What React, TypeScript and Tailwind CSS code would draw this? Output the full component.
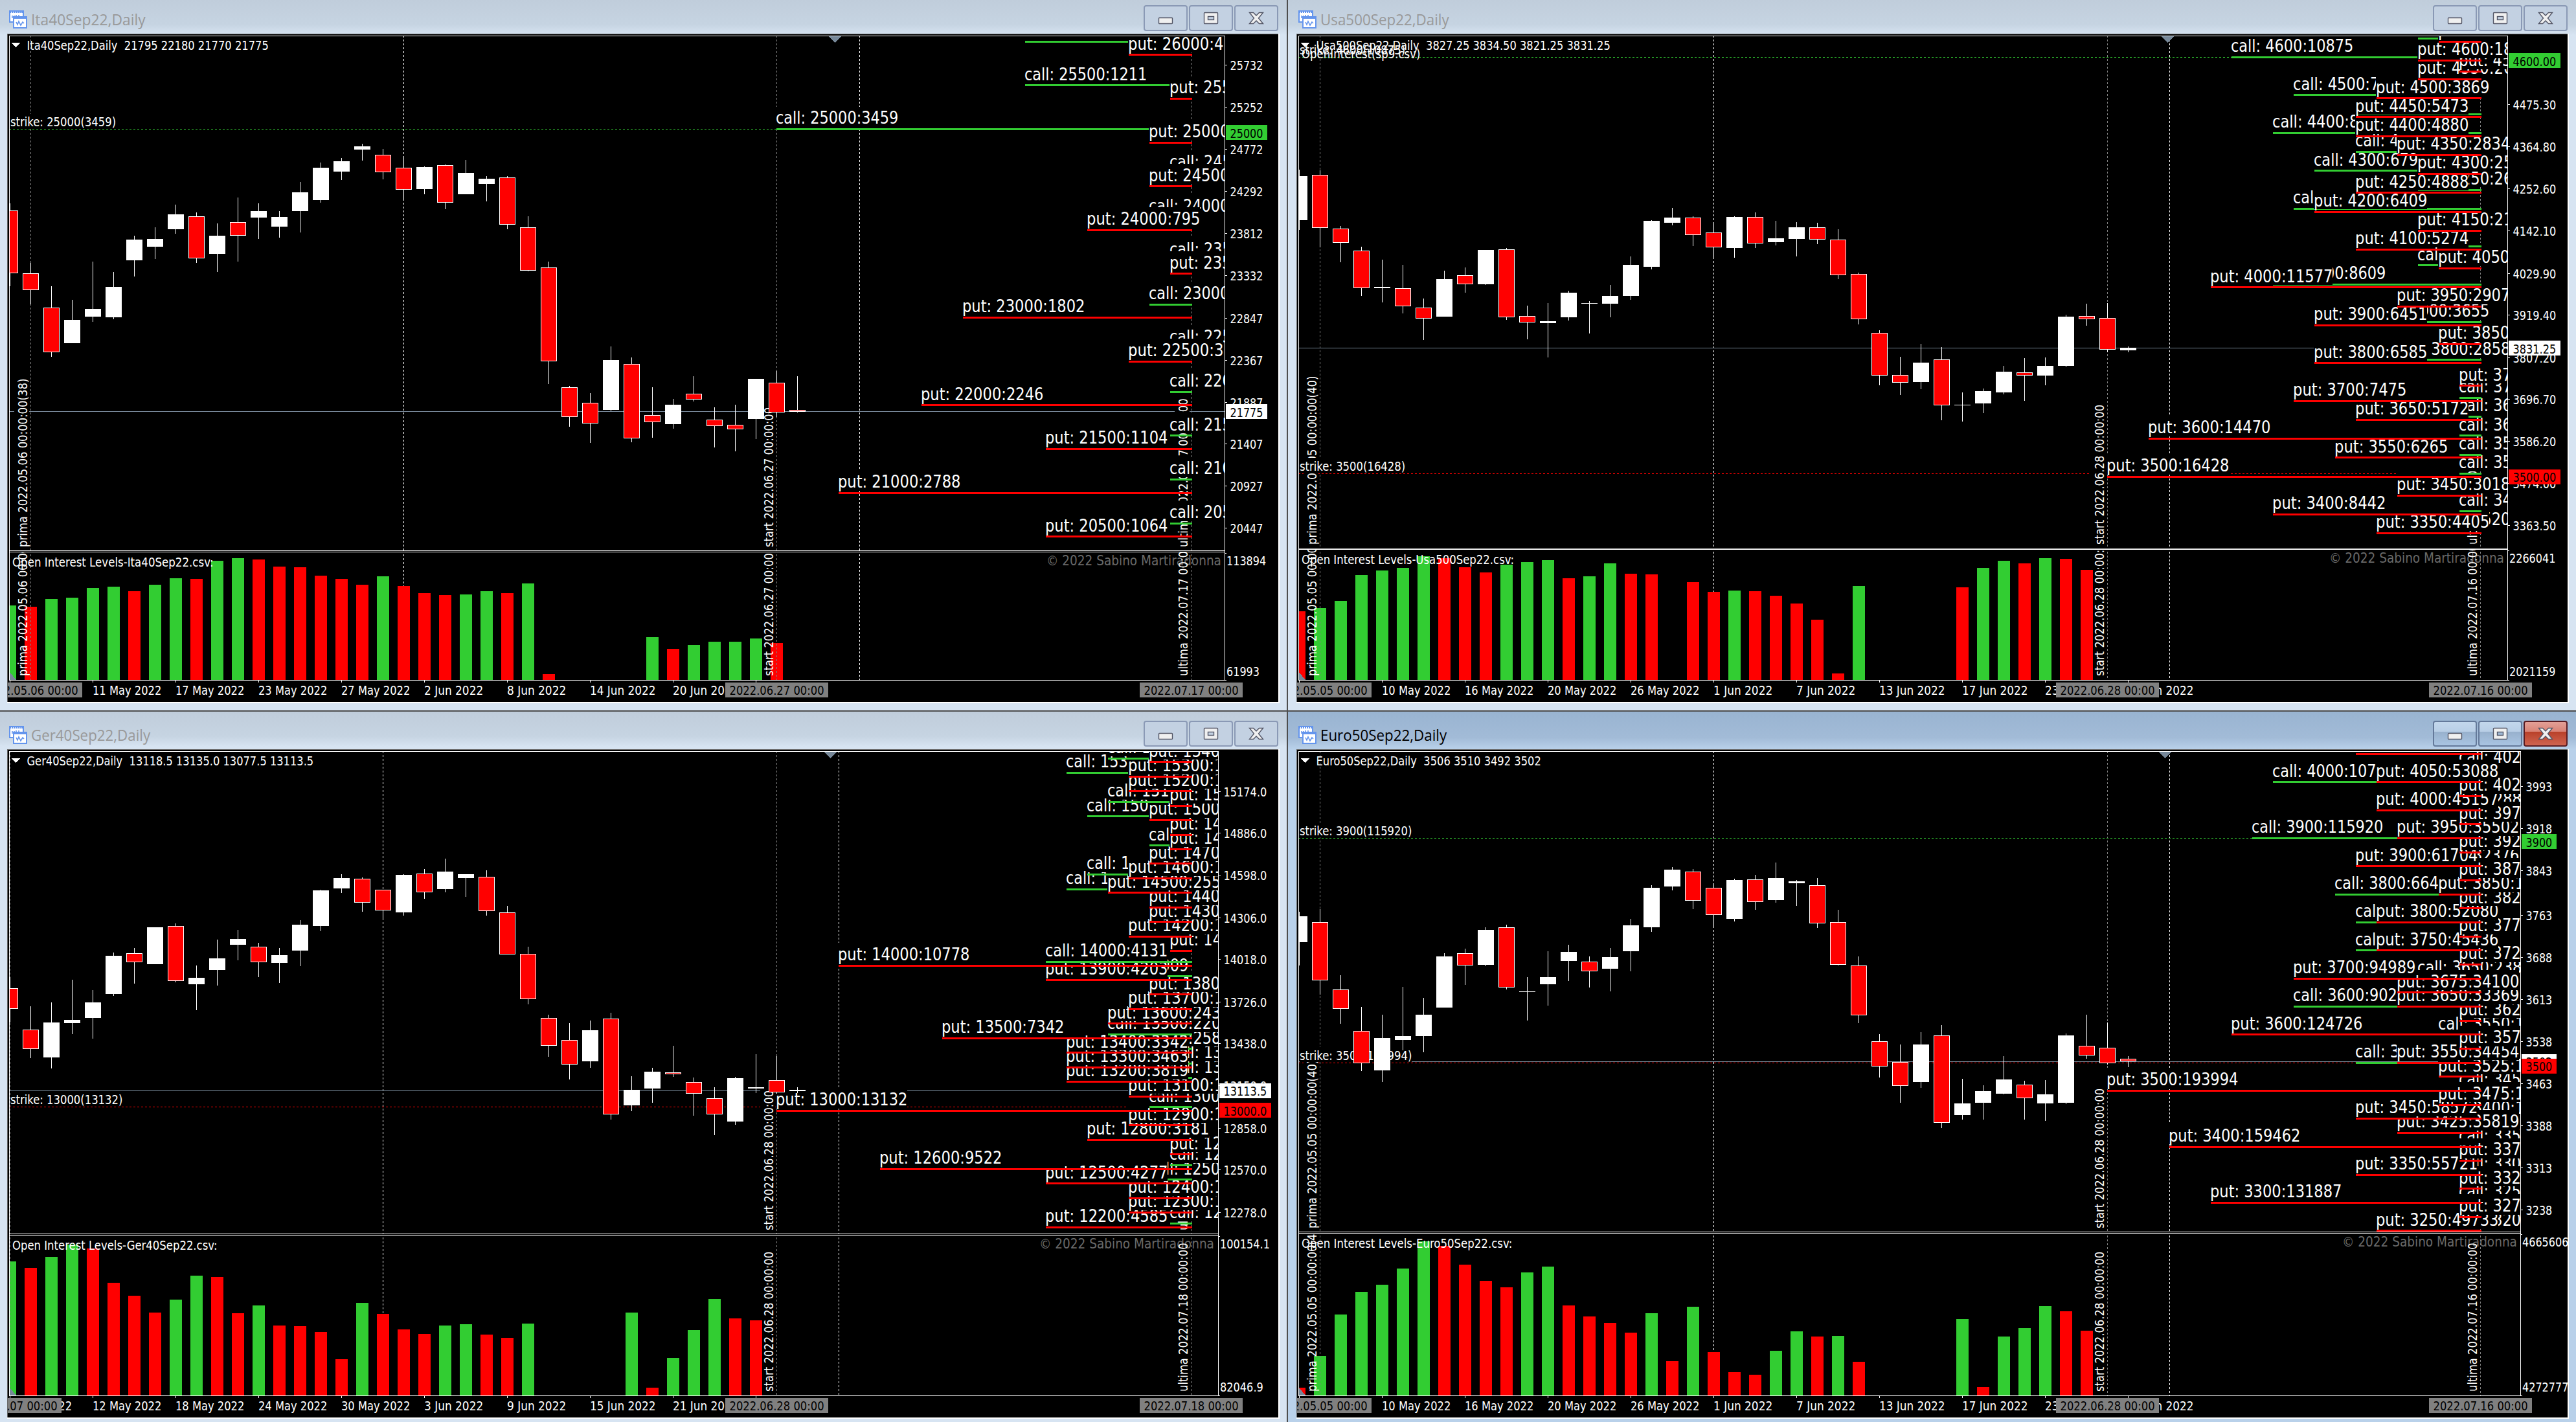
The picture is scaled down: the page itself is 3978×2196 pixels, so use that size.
import { useId } from "react";

type Candle = ["r" | "w", number, number, number, number];
type Bar = [number, "r" | "g", number];
// strike, call bars, call label, put bars, put label
type Level = [number, number, string, number, string];

interface ChartData {
      title: string;
      quote: string;
      left: number;
      top: number;
      x0: number;
      right: number;
      split: number;
      ref: [number, number];
      slope: number;
      putShift: number;
      price: number;
      decimals: number;
      unit: number;
      candles: Candle[];
      barUnit: number;
      barTop: number;
      bars: Bar[];
      levels: Level[];
      strikes: { at: number; label: string; color: string }[];
      ticks: number[];
      subTicks: [string, string];
      dates: [number, string][];
      marks: { at: number; name: string; date: string; label: string; main: boolean }[];
      monthLines: number[];
      shiftMark: number;
      copyright: number;
      comment?: string;
}

const STEP = 32;
const LIME = "#32cd32";
const RED = "#ff0000";
const SLATE = "#778899";

// advance widths in em
const ADVANCE: Record<string, number> = {
      " ": 0.3125, ":": 0.354, ".": 0.303, ",": 0.303, "(": 0.383, ")": 0.383, "-": 0.363, "©": 0.928,
      a: 0.525, b: 0.553, c: 0.4615, d: 0.553, e: 0.5265, f: 0.32, g: 0.553, h: 0.558, i: 0.2285, j: 0.282,
      k: 0.498, l: 0.2285, m: 0.84, n: 0.558, o: 0.543, p: 0.553, r: 0.36, s: 0.447, t: 0.3345, u: 0.558,
      v: 0.498, w: 0.742, x: 0.495, y: 0.498, z: 0.444,
      D: 0.678, E: 0.561, G: 0.667, I: 0.3735, J: 0.417, L: 0.498, M: 0.77, O: 0.708, S: 0.557, U: 0.6555,
};

const measure = (text: string, size: number) =>
      [...text].reduce((sum, ch) => sum + (ADVANCE[ch] ?? 0.5459), 0) * size;

const SMALL = 18.67;
const LABEL = 25.67;

interface LabelProps {
      x: number;
      y: number;
      text: string;
      size?: number;
      fill?: string;
      solid?: boolean;
      vertical?: boolean;
}

const Label = ({ x, y, text, size = SMALL, fill = "#fff", solid, vertical }: LabelProps) => {
      const width = measure(text, size);
      return (
            <g transform={vertical ? `translate(${x} ${y}) rotate(-90)` : `translate(${x} ${y})`}>
                  {solid && <rect x={0} y={-size * 1.04} width={width} height={size * 1.22} fill="#000" />}
                  <text
                        className="whitespace-pre font-['DejaVu_Sans_Condensed','DejaVu_Sans',sans-serif] [font-stretch:condensed]"
                        fontSize={size}
                        fill={fill}
                        textLength={width}
                        lengthAdjust="spacingAndGlyphs"
                  >
                        {text}
                  </text>
            </g>
      );
};

const Chart = ({ data: d }: { data: ChartData }) => {
      const id = useId();
      const dy = d.top;
      const base = dy + 998;
      const plotTop = dy + 3;
      const plotLeft = d.left + 3;
      const last = d.x0 + STEP * 57;
      const barX = (i: number) => d.x0 + STEP * i;
      const priceY = (p: number) => d.ref[1] + (d.ref[0] - p) * d.slope;
      const origin = dy < 500 ? 0 : 1090;
      const candleY = (v: number) => Math.round(origin + v / d.unit);
      const fmt = (p: number) => p.toFixed(d.decimals);
      const tagWidth = measure(fmt(d.price), SMALL) + 13;

      const tag = (y: number, p: number, bg: string, fg: string) => (
            <g key={`${p}${bg}`}>
                  <rect x={d.right + 2} y={Math.round(y - 11.5)} width={tagWidth} height={23} fill={bg} />
                  <Label x={d.right + 8.5} y={y + 8} text={fmt(p)} fill={fg} />
            </g>
      );

      return (
            <svg
                  className="block h-[1032px] w-[1963px] bg-black"
                  viewBox={`${d.left} ${d.top} 1963 1032`}
                  shapeRendering="crispEdges"
            >
                  <defs>
                        <clipPath id={`${id}m`}>
                              <rect x={plotLeft + 1} y={plotTop + 1} width={d.right - plotLeft - 1} height={d.split - plotTop - 1} />
                        </clipPath>
                        <clipPath id={`${id}s`}>
                              <rect x={plotLeft + 1} y={d.split + 3} width={d.right - plotLeft - 1} height={base - d.split - 3} />
                        </clipPath>
                  </defs>

                  {/* price pane */}
                  <g clipPath={`url(#${id}m)`}>
                        {d.monthLines.map((i) => (
                              <path key={i} d={`M${barX(i)} ${plotTop}V${d.split}`} stroke="#fff" strokeDasharray="3 3" />
                        ))}
                        {d.marks.map((m) => (
                              <path key={m.at} d={`M${barX(m.at)} ${plotTop}V${d.split}`} stroke="#808080" strokeDasharray="3 3" />
                        ))}
                        <path d={`M${plotLeft} ${Math.floor(priceY(d.price)) + 0.5}H${d.right}`} stroke={SLATE} />
                        {d.strikes.map((s) => (
                              <path
                                    key={s.at}
                                    d={`M${plotLeft} ${Math.floor(priceY(s.at)) + 0.5}H${d.right}`}
                                    stroke={s.color}
                                    strokeDasharray="3 3"
                              />
                        ))}
                        {d.marks.map((m) => m.main && (
                              <Label key={m.at} x={barX(m.at) - 6} y={d.split - 5} text={m.name + " " + m.date} solid vertical />
                        ))}
                        {d.strikes.map((s) => (
                              <Label key={s.at} x={plotLeft + 2} y={priceY(s.at) - 4.5} text={s.label} solid />
                        ))}
                        {d.levels.map(([k, cn, ct, pn, pt]) => {
                              const cy = priceY(k);
                              const py = cy + d.putShift;
                              const cx = last - STEP * cn - 1;
                              const px = last - STEP * pn - 1;
                              return (
                                    <g key={k}>
                                          {cn > 0 && <rect x={cx} y={Math.round(cy - 1.5)} width={last - cx + 1} height={3} fill={LIME} />}
                                          {ct && <Label x={cx - 0.5} y={cy - 8.2} text={ct} size={LABEL} solid />}
                                          {pt && <Label x={px - 0.5} y={py - 8.2} text={pt} size={LABEL} solid />}
                                          {pn > 0 && <rect x={px} y={Math.round(py - 1.5)} width={last - px + 1} height={3} fill={RED} />}
                                    </g>
                              );
                        })}
                        {d.candles.map(([kind, hi, a, b, lo], i) => {
                              const x = barX(i);
                              const y = candleY(a);
                              const h = Math.max(candleY(b) - y, 1);
                              return (
                                    <g key={i}>
                                          <rect x={x - 0.5} y={candleY(hi)} width={1} height={candleY(lo) - candleY(hi)} fill="#fff" />
                                          <rect x={x - 12.5} y={y} width={25} height={h} fill="#fff" />
                                          {kind === "r" && h > 2 && <rect x={x - 11.5} y={y + 1} width={23} height={h - 2} fill={RED} />}
                                    </g>
                              );
                        })}
                        <path d={`M${d.shiftMark - 10} ${plotTop + 1}h20l-10 10z`} fill={SLATE} />
                  </g>
                  <path d={`M${plotLeft + 4} ${dy + 14}h13l-6.5 7z`} fill="#fff" />
                  {d.comment && <Label x={plotLeft + 5} y={dy + 38} text={d.comment} />}
                  <Label x={plotLeft + 27.5} y={dy + 25} text={`${d.title},Daily  ${d.quote}`} />

                  {/* open interest pane */}
                  <g clipPath={`url(#${id}s)`}>
                        {d.monthLines.map((i) => (
                              <path key={i} d={`M${barX(i)} ${d.split}V${base}`} stroke="#fff" strokeDasharray="3 3" />
                        ))}
                        <Label x={d.copyright} y={d.split + 22.5} text="© 2022 Sabino Martiradonna" size={21} fill="#696969" />
                        {d.bars.map(([i, kind, v]) => {
                              const y = Math.round(d.barTop + v / d.barUnit);
                              return <rect key={i} x={barX(i) - 9.5} y={y} width={19} height={base - y} fill={kind === "g" ? LIME : RED} />;
                        })}
                        {d.marks.map((m) => (
                              <path key={m.at} d={`M${barX(m.at)} ${d.split}V${base}`} stroke="#808080" strokeDasharray="3 3" />
                        ))}
                        {d.marks.map((m) => (
                              <Label key={m.at} x={barX(m.at) - 6} y={base - 6} text={m.name + " " + m.date} vertical />
                        ))}
                        <path d={`M${plotLeft + 1} ${base - 12}v12h10z`} fill={SLATE} />
                        <Label x={plotLeft + 5} y={d.split + 25} text={`Open Interest Levels-${d.title}.csv:`} />
                  </g>

                  {/* frame lines */}
                  <path
                        d={`M${plotLeft + 0.5} ${base + 0.5}V${plotTop + 0.5}H${d.right + 0.5}V${base + 0.5}H${plotLeft}M${plotLeft} ${d.split + 0.5}H${d.right}M${plotLeft} ${d.split + 2.5}H${d.right}`}
                        stroke="#fff"
                        fill="none"
                  />

                  {/* price scale */}
                  {d.ticks.map((p) => (
                        <g key={p}>
                              <rect x={d.right} y={Math.round(priceY(p))} width={4} height={1} fill="#fff" />
                              <Label x={d.right + 8.5} y={priceY(p) + 8} text={fmt(p)} />
                        </g>
                  ))}
                  <rect x={d.right} y={d.split + 4} width={3} height={1} fill="#fff" />
                  <rect x={d.right} y={base} width={3} height={1} fill="#fff" />
                  <Label x={d.right + 3} y={d.split + 22.5} text={d.subTicks[0]} />
                  <Label x={d.right + 3} y={base - 6} text={d.subTicks[1]} />
                  {tag(priceY(d.price), d.price, "#fff", "#000")}
                  {d.strikes.map((s) => tag(priceY(s.at) + 5, s.at, s.color, "#000"))}

                  {/* time scale */}
                  {d.dates.map(([i, text]) => (
                        <g key={i}>
                              <rect x={barX(i) - 0.5} y={base} width={1} height={4} fill="#fff" />
                              {text && <Label x={barX(i) - 0.5} y={base + 22.5} text={text} />}
                        </g>
                  ))}
                  {d.marks.map((m) => (
                        <g key={m.at}>
                              <rect x={barX(m.at) - 80} y={base + 4} width={159} height={23} fill="#808080" />
                              <Label x={barX(m.at) - 73} y={base + 22.5} text={m.label} fill="#000" />
                        </g>
                  ))}
                  <path d={`M${d.left + 0.5} ${d.top + 1032}V${d.top + 0.5}H${d.left + 1963}`} stroke="#696969" fill="none" />
            </svg>
      );
};

const ChartIcon = () => (
      <svg className="h-7 w-7" viewBox="0 0 28 28" fill="#fff" stroke="#6495ed" strokeWidth="2">
            <rect x="1" y="1" width="21" height="17" />
            <path d="M1 2.5h21" strokeWidth="3" strokeDasharray="2 1" />
            <path d="M5 12V8M8 11V8M11 14V7M15 10V7" strokeWidth="1.6" />
            <rect x="7" y="10" width="20" height="17" />
            <path d="M7 11.5h20" strokeWidth="3" />
            <path d="M11 18l2 4 2-5 3 6 3-5 2 2" fill="none" strokeWidth="1.6" />
      </svg>
);

const ControlButton = ({ kind, active }: { kind: "min" | "max" | "close"; active?: boolean }) => {
      let look = "border-[#8a99b5] bg-[#c3d1e2]";
      if (active) {
            look = kind === "close"
                  ? "border-[#5a1c22] bg-[linear-gradient(#e3a097_0%,#d98275_42%,#b9412a_43%,#cf6450_100%)]"
                  : "border-[#64799a] bg-[linear-gradient(#c3d7ec_0%,#b8cee6_42%,#98b1cd_43%,#a9c4e2_100%)]";
      }
      return (
            <div className={`flex h-10 w-[68px] items-center justify-center rounded-sm border-2 ${look}`}>
                  <svg className="h-5 w-6" viewBox="0 0 24 20" stroke="#535666" strokeWidth="1.4" fill="#f0f0f0">
                        {kind === "min" && <rect x="1.5" y="9.5" width="21" height="9" rx="1" />}
                        {kind === "max" && (
                              <>
                                    <rect x="1.5" y="1.5" width="21" height="17" rx="1" />
                                    <rect x="7.5" y="7.5" width="9" height="5" fill={active ? "#9fb8d4" : "#c3d1e2"} />
                              </>
                        )}
                        {kind === "close" && <path d="M1.500 1.500h6l4.500 4.500 4.500-4.500h6l-7 8.500 7 8.500h-6l-4.500-4.500-4.500 4.500h-6l7-8.500z" />}
                  </svg>
            </div>
      );
};

const ChartWindow = ({ data, active, side, row }: { data: ChartData; active?: boolean; side: "left" | "right"; row: "top" | "bottom" }) => (
      <section
            className={`flex shrink-0 flex-col ${side === "left" ? "w-[1989px] border-r-2 border-[#4d4d4d] pl-[11px]" : "w-[1989px] pl-[13px]"} ${
                  row === "top" ? "h-[1099px] border-b-2 border-b-[#4d4d4d]" : "h-[1097px]"
            } ${active ? "bg-[linear-gradient(#99b4d1_0,#a2bbd7_40px,#b9d1ea_58px)]" : "bg-[linear-gradient(#c0cddb_0,#c6d4e2_38px,#d7e4f2_54px)]"}`}
      >
            <header className={`flex w-[1963px] shrink-0 items-start ${row === "top" ? "h-[52px] pt-2" : "h-[58px] pt-[14px]"}`}>
                  <div className="flex items-center gap-1.5 pl-[3px] pt-1.5">
                        <ChartIcon />
                        <svg className="h-8 w-[300px]">
                              <text
                                    x={0}
                                    y={24.5}
                                    fontSize={23.3}
                                    fill={active ? "#000" : "#999"}
                                    textLength={measure(`${data.title},Daily`, 23.5)}
                                    lengthAdjust="spacingAndGlyphs"
                                    className="font-['Open_Sans','Noto_Sans',sans-serif]"
                              >
                                    {data.title},Daily
                              </text>
                        </svg>
                  </div>
                  <div className="ml-auto flex gap-0.5">
                        <ControlButton kind="min" active={active} />
                        <ControlButton kind="max" active={active} />
                        <ControlButton kind="close" active={active} />
                  </div>
            </header>
            <div className="w-[1965px] border-b-2 border-r-2 border-white">
                  <Chart data={data} />
            </div>
      </section>
);

const ita: ChartData = {
      title: "Ita40Sep22",
      quote: "21795 22180 21770 21775",
      left: 11, top: 52, x0: 15.5, right: 1891, split: 850,
      ref: [25000, 199.5], slope: 0.13525, putShift: 20.6, price: 21775, decimals: 0,
      unit: 1.8233,
      candles: [
            ["r", 573, 593, 769, 806], ["r", 740, 769, 816, 857], ["r", 806, 866, 992, 1005], ["w", 844, 901, 966, 966],
            ["w", 737, 870, 892, 906], ["w", 766, 808, 893, 899], ["w", 664, 675, 733, 779], ["w", 640, 673, 695, 729],
            ["w", 576, 603, 645, 658], ["r", 598, 609, 728, 740], ["w", 629, 664, 715, 766], ["r", 556, 625, 663, 737],
            ["w", 573, 594, 613, 673], ["w", 594, 611, 638, 669], ["w", 512, 542, 594, 655], ["w", 458, 472, 563, 571],
            ["w", 445, 454, 483, 507], ["w", 405, 412, 421, 452], ["r", 419, 436, 485, 505], ["r", 440, 472, 535, 563],
            ["w", 469, 470, 532, 547], ["r", 464, 465, 571, 589], ["w", 450, 487, 547, 547], ["w", 496, 503, 518, 567],
            ["r", 496, 500, 632, 645], ["r", 609, 640, 763, 764], ["r", 737, 753, 1018, 1081], ["r", 1087, 1090, 1175, 1202],
            ["r", 1107, 1134, 1192, 1247], ["w", 975, 1014, 1154, 1157], ["r", 1006, 1025, 1234, 1245], ["r", 1090, 1169, 1189, 1233],
            ["w", 1123, 1140, 1194, 1207], ["r", 1059, 1108, 1125, 1130], ["r", 1147, 1181, 1200, 1260], ["r", 1140, 1196, 1209, 1271],
            ["w", 1067, 1067, 1180, 1236], ["r", 1045, 1077, 1161, 1174], ["r", 1059, 1154, 1160, 1161],
      ],
      barUnit: 3, barTop: 840,
      bars: [
            [0, "g", 285], [1, "r", 291], [2, "g", 255], [3, "g", 249], [4, "g", 204], [5, "g", 198], [6, "r", 219], [7, "g", 189],
            [8, "g", 159], [9, "r", 162], [10, "g", 78], [11, "g", 66], [12, "r", 72], [13, "r", 105], [14, "r", 108], [15, "r", 147],
            [16, "r", 162], [17, "r", 189], [18, "g", 150], [19, "r", 195], [20, "r", 228], [21, "r", 237], [22, "g", 234],
            [23, "g", 219], [24, "r", 228], [25, "g", 183], [26, "r", 603], [31, "g", 432], [32, "r", 486], [33, "g", 468],
            [34, "g", 453], [35, "g", 453], [36, "g", 438], [37, "r", 459],
      ],
      levels: [
            [20500, 1, "call: 20500", 7, "put: 20500:1064"],
            [21000, 1, "call: 21000", 17, "put: 21000:2788"],
            [21500, 1, "call: 21500", 7, "put: 21500:1104"],
            [22000, 1, "call: 22000", 13, "put: 22000:2246"],
            [22500, 1, "call: 22500", 3, "put: 22500:3"],
            [23000, 2, "call: 23000", 11, "put: 23000:1802"],
            [23500, 1, "call: 23500", 1, "put: 23500"],
            [24000, 2, "call: 24000", 5, "put: 24000:795"],
            [24500, 1, "call: 24500", 2, "put: 24500"],
            [25000, 20, "call: 25000:3459", 2, "put: 25000"],
            [25500, 8, "call: 25500:1211", 1, "put: 25500"],
            [26000, 8, "", 3, "put: 26000:4"],
      ],
      strikes: [{ at: 25000, label: "strike: 25000(3459)", color: LIME }],
      ticks: [25732, 25252, 24772, 24292, 23812, 23332, 22847, 22367, 21887, 21407, 20927, 20447],
      subTicks: ["113894", "61993"],
      dates: [
            [0, ""], [4, "11 May 2022"], [8, "17 May 2022"], [12, "23 May 2022"], [16, "27 May 2022"], [20, "2 Jun 2022"],
            [24, "8 Jun 2022"], [28, "14 Jun 2022"], [32, "20 Jun 2022"], [36, ""],
      ],
      marks: [
            { at: 1, name: "prima", date: "2022.05.06 00:00:00(38)", label: "2022.05.06 00:00", main: true },
            { at: 37, name: "start", date: "2022.06.27 00:00:00", label: "2022.06.27 00:00", main: true },
            { at: 57, name: "ultima", date: "2022.07.17 00:00:00", label: "2022.07.17 00:00", main: true },
      ],
      monthLines: [19, 41],
      shiftMark: 1289.5,
      copyright: 1616,
};

const usa: ChartData = {
      title: "Usa500Sep22",
      quote: "3827.25 3834.50 3821.25 3831.25",
      left: 2002, top: 52, x0: 2006.5, right: 3872, split: 846,
      ref: [4600, 88.5], slope: 0.5843, putShift: 4.8, price: 3831.25, decimals: 2,
      unit: 1.8233,
      candles: [
            ["w", 478, 496, 620, 648], ["r", 480, 492, 641, 696], ["r", 636, 644, 684, 738], ["r", 695, 706, 812, 833],
            ["w", 731, 808, 811, 851], ["r", 746, 811, 862, 882], ["r", 841, 866, 897, 957], ["w", 762, 786, 892, 892],
            ["r", 753, 775, 801, 824], ["w", 704, 704, 800, 802], ["r", 698, 702, 893, 901], ["r", 861, 890, 908, 955],
            ["w", 853, 904, 910, 1006], ["w", 819, 824, 893, 903], ["w", 848, 853, 855, 939], ["w", 802, 833, 855, 893],
            ["w", 722, 746, 833, 844], ["w", 620, 622, 751, 758], ["w", 585, 613, 627, 634], ["r", 609, 613, 661, 693],
            ["r", 625, 655, 697, 728], ["w", 609, 611, 698, 726], ["r", 598, 611, 685, 698], ["w", 622, 671, 682, 691],
            ["w", 625, 640, 673, 722], ["r", 627, 640, 675, 687], ["r", 645, 675, 774, 786], ["r", 768, 771, 898, 913],
            ["r", 930, 937, 1058, 1085], ["r", 1005, 1056, 1078, 1112], ["w", 968, 1021, 1076, 1096], ["r", 977, 1012, 1142, 1183],
            ["w", 1105, 1139, 1141, 1187], ["w", 1094, 1101, 1136, 1163], ["w", 1030, 1047, 1105, 1110], ["r", 1008, 1048, 1057, 1129],
            ["w", 1006, 1030, 1057, 1085], ["w", 886, 892, 1030, 1034], ["r", 855, 890, 899, 917], ["r", 853, 895, 985, 992],
            ["w", 975, 979, 986, 992],
      ],
      barUnit: 3, barTop: 840,
      bars: [
            [0, "r", 312], [1, "g", 297], [2, "g", 264], [3, "g", 144], [4, "g", 123], [5, "g", 111], [6, "g", 57], [7, "r", 66],
            [8, "r", 108], [9, "r", 132], [10, "g", 96], [11, "g", 84], [12, "g", 75], [13, "r", 159], [14, "g", 150], [15, "g", 90],
            [16, "r", 138], [17, "r", 141], [19, "r", 177], [20, "r", 222], [21, "g", 216], [22, "r", 219], [23, "r", 240],
            [24, "r", 276], [25, "r", 351], [26, "r", 600], [27, "g", 195], [32, "r", 201], [33, "g", 111], [34, "g", 78],
            [35, "r", 90], [36, "g", 66], [37, "r", 69], [38, "r", 120],
      ],
      levels: [
            [3350, 4, "call: 3350:1520", 5, "put: 3350:4405"],
            [3400, 1, "call: 3400", 10, "put: 3400:8442"],
            [3450, 0, "", 4, "put: 3450:3018"],
            [3500, 1, "call: 3500", 18, "put: 3500:16428"],
            [3550, 1, "call: 3550", 7, "put: 3550:6265"],
            [3600, 1, "call: 3600", 16, "put: 3600:14470"],
            [3650, 1, "call: 3650", 6, "put: 3650:5172"],
            [3700, 1, "call: 3700", 9, "put: 3700:7475"],
            [3740, 1, "", 1, "put: 3740"],
            [3800, 4, "call: 3800:2858", 8, "put: 3800:6585"],
            [3850, 0, "", 2, "put: 3850"],
            [3900, 5, "call: 3900:3655", 8, "put: 3900:6451"],
            [3950, 0, "", 4, "put: 3950:2907"],
            [4000, 10, "call: 4000:8609", 13, "put: 4000:11577"],
            [4050, 3, "call: 4050", 2, "put: 4050"],
            [4100, 6, "", 6, "put: 4100:5274"],
            [4150, 0, "", 3, "put: 4150:21"],
            [4200, 9, "call: 4200", 8, "put: 4200:6409"],
            [4250, 3, "call: 4250:26", 6, "put: 4250:4888"],
            [4300, 8, "call: 4300:6791", 3, "put: 4300:25"],
            [4350, 6, "call: 4350", 4, "put: 4350:2834"],
            [4400, 10, "call: 4400:8", 6, "put: 4400:4880"],
            [4450, 6, "", 6, "put: 4450:5473"],
            [4500, 9, "call: 4500:7", 5, "put: 4500:3869"],
            [4550, 0, "", 3, "put: 4550:26"],
            [4571, 1, "", 1, "put: 4575"],
            [4600, 12, "call: 4600:10875", 3, "put: 4600:18"],
            [4650, 3, "call: 4650", 2, "put: 4650"],
      ],
      strikes: [
            { at: 4600, label: "strike: 4600(10875)", color: LIME },
            { at: 3500, label: "strike: 3500(16428)", color: RED },
      ],
      ticks: [4475.3, 4364.8, 4252.6, 4142.1, 4029.9, 3919.4, 3807.2, 3696.7, 3586.2, 3474, 3363.5],
      subTicks: ["2266041", "2021159"],
      dates: [
            [0, ""], [4, "10 May 2022"], [8, "16 May 2022"], [12, "20 May 2022"], [16, "26 May 2022"], [20, "1 Jun 2022"],
            [24, "7 Jun 2022"], [28, "13 Jun 2022"], [32, "17 Jun 2022"], [36, "23 Jun 2022"], [40, "29 Jun 2022"],
      ],
      marks: [
            { at: 1, name: "prima", date: "2022.05.05 00:00:00(40)", label: "2022.05.05 00:00", main: true },
            { at: 39, name: "start", date: "2022.06.28 00:00:00", label: "2022.06.28 00:00", main: true },
            { at: 57, name: "ultima", date: "2022.07.16 00:00:00", label: "2022.07.16 00:00", main: true },
      ],
      monthLines: [20, 42],
      shiftMark: 3347.5,
      copyright: 3597,
      comment: "OpenInterest(sp9.csv)",
};

const ger: ChartData = {
      title: "Ger40Sep22",
      quote: "13118.5 13135.0 13077.5 13113.5",
      left: 11, top: 1157, x0: 15.5, right: 1881, split: 1905,
      ref: [13000, 1709.7], slope: 0.22442, putShift: 5.8, price: 13113.5, decimals: 1,
      unit: 1.41772,
      candles: [
            ["r", 594, 618, 664, 693], ["r", 658, 709, 752, 771], ["w", 649, 693, 770, 794], ["w", 600, 688, 695, 719],
            ["w", 622, 649, 683, 729], ["w", 540, 547, 631, 635], ["r", 530, 542, 561, 608], ["w", 485, 485, 566, 566],
            ["r", 477, 482, 603, 605], ["w", 569, 595, 610, 666], ["w", 512, 553, 578, 612], ["w", 491, 510, 523, 557],
            ["r", 519, 527, 562, 594], ["w", 530, 546, 563, 607], ["w", 469, 479, 536, 570], ["w", 403, 404, 482, 493],
            ["w", 369, 377, 400, 410], ["r", 376, 379, 431, 451], ["r", 403, 403, 448, 468], ["w", 369, 370, 452, 459],
            ["r", 357, 367, 408, 422], ["w", 335, 363, 401, 408], ["w", 369, 369, 377, 418], ["r", 360, 374, 449, 459],
            ["r", 438, 452, 544, 545], ["r", 527, 543, 642, 654], ["r", 676, 683, 744, 768], ["r", 695, 732, 786, 818],
            ["w", 689, 710, 778, 793], ["r", 672, 685, 894, 906], ["w", 811, 841, 875, 887], ["w", 793, 801, 838, 869],
            ["r", 744, 802, 807, 813], ["r", 814, 824, 849, 897], ["r", 835, 859, 894, 940], ["w", 812, 815, 910, 917],
            ["w", 763, 835, 838, 848], ["r", 767, 819, 847, 849], ["w", 835, 841, 844, 848],
      ],
      barUnit: 1.41772, barTop: 1090,
      bars: [
            [0, "g", 1216], [1, "r", 1231], [2, "g", 1206], [3, "g", 1180], [4, "r", 1188], [5, "r", 1263], [6, "r", 1292],
            [7, "r", 1328], [8, "g", 1300], [9, "g", 1248], [10, "r", 1250], [11, "r", 1330], [12, "g", 1313], [13, "r", 1357],
            [14, "r", 1358], [15, "r", 1371], [16, "r", 1430], [17, "g", 1307], [18, "r", 1331], [19, "r", 1365], [20, "r", 1375],
            [21, "g", 1357], [22, "g", 1354], [23, "r", 1377], [24, "r", 1384], [25, "g", 1353], [30, "g", 1328], [31, "r", 1493],
            [32, "g", 1428], [33, "g", 1367], [34, "g", 1299], [35, "r", 1341], [36, "r", 1345],
      ],
      levels: [
            [12200, 1, "call: 12200", 7, "put: 12200:4585"],
            [12300, 0, "", 3, "put: 12300:1"],
            [12400, 0, "", 3, "put: 12400:1"],
            [12500, 2, "call: 12500", 7, "put: 12500:4277"],
            [12600, 1, "call: 12600", 15, "put: 12600:9522"],
            [12700, 0, "", 1, "put: 12700"],
            [12800, 0, "", 5, "put: 12800:3181"],
            [12900, 0, "", 3, "put: 12900:1"],
            [13000, 2, "call: 13000", 20, "put: 13000:13132"],
            [13100, 0, "", 3, "put: 13100:1"],
            [13200, 1, "call: 13200", 6, "put: 13200:3819"],
            [13300, 1, "call: 13300", 6, "put: 13300:3463"],
            [13400, 4, "call: 13400:258", 6, "put: 13400:3342"],
            [13500, 4, "call: 13500:220", 12, "put: 13500:7342"],
            [13600, 0, "", 4, "put: 13600:243"],
            [13700, 0, "", 3, "put: 13700:1"],
            [13800, 0, "", 2, "put: 13800"],
            [13900, 6, "call: 13900:3009", 7, "put: 13900:4203"],
            [14000, 7, "call: 14000:4131", 17, "put: 14000:10778"],
            [14100, 0, "", 1, "put: 14100"],
            [14200, 0, "", 3, "put: 14200:1"],
            [14300, 0, "", 2, "put: 14300"],
            [14400, 0, "", 2, "put: 14400"],
            [14500, 6, "call: 14500", 4, "put: 14500:255"],
            [14600, 5, "call: 14600", 3, "put: 14600:1"],
            [14700, 0, "", 2, "put: 14700"],
            [14800, 2, "call: 14800", 1, "put: 14800"],
            [14900, 0, "", 1, "put: 14900"],
            [15000, 5, "call: 15000", 2, "put: 15000"],
            [15100, 4, "call: 15100", 1, "put: 15100"],
            [15200, 0, "", 3, "put: 15200:1"],
            [15300, 6, "call: 15300", 3, "put: 15300:1"],
            [15400, 4, "call: 15400", 2, "put: 15400"],
      ],
      strikes: [{ at: 13000, label: "strike: 13000(13132)", color: RED }],
      ticks: [15174, 14886, 14598, 14306, 14018, 13726, 13438, 13150, 12858, 12570, 12278],
      subTicks: ["100154.1", "82046.9"],
      dates: [
            [0, "6 May 2022"], [4, "12 May 2022"], [8, "18 May 2022"], [12, "24 May 2022"], [16, "30 May 2022"], [20, "3 Jun 2022"],
            [24, "9 Jun 2022"], [28, "15 Jun 2022"], [32, "21 Jun 2022"], [36, ""],
      ],
      marks: [
            { at: 0, name: "prima", date: "2022.05.07 00:00:00", label: "2022.05.07 00:00", main: false },
            { at: 37, name: "start", date: "2022.06.28 00:00:00", label: "2022.06.28 00:00", main: true },
            { at: 57, name: "ultima", date: "2022.07.18 00:00:00", label: "2022.07.18 00:00", main: true },
      ],
      monthLines: [18, 40],
      shiftMark: 1282.5,
      copyright: 1605,
};

const euro: ChartData = {
      title: "Euro50Sep22",
      quote: "3506 3510 3492 3502",
      left: 2002, top: 1157, x0: 2006.5, right: 3892, split: 1902,
      ref: [3900, 1294.5], slope: 0.8664, putShift: 43.3, price: 3502, decimals: 0,
      unit: 1.41772,
      candles: [
            ["w", 451, 461, 517, 569], ["r", 445, 474, 601, 632], ["r", 590, 621, 664, 696], ["r", 659, 712, 782, 800],
            ["w", 676, 727, 798, 824], ["w", 615, 723, 732, 754], ["w", 639, 676, 723, 759], ["w", 542, 549, 661, 661],
            ["r", 532, 542, 568, 611], ["w", 485, 491, 567, 570], ["r", 479, 485, 616, 621], ["w", 594, 625, 627, 689],
            ["w", 537, 594, 610, 656], ["w", 523, 539, 559, 603], ["r", 549, 560, 581, 616], ["w", 530, 550, 576, 625],
            ["w", 466, 481, 537, 581], ["w", 393, 398, 485, 495], ["w", 353, 359, 396, 404], ["r", 357, 363, 427, 445],
            ["r", 393, 399, 458, 485], ["w", 379, 381, 466, 472], ["r", 370, 380, 430, 447], ["w", 343, 377, 425, 431],
            ["w", 381, 384, 388, 438], ["r", 377, 393, 476, 486], ["r", 447, 474, 567, 569], ["r", 549, 568, 677, 695],
            ["r", 719, 735, 789, 814], ["r", 741, 780, 832, 869], ["w", 715, 741, 824, 836], ["r", 699, 722, 913, 924],
            ["w", 817, 870, 896, 906], ["w", 831, 844, 869, 906], ["w", 767, 818, 849, 851], ["r", 821, 829, 859, 906],
            ["w", 819, 851, 870, 909], ["w", 717, 722, 869, 872], ["r", 676, 744, 766, 773], ["r", 693, 749, 783, 785],
            ["r", 767, 773, 778, 791],
      ],
      barUnit: 1.41772, barTop: 1090,
      bars: [
            [0, "r", 1493], [1, "g", 1423], [2, "g", 1333], [3, "g", 1283], [4, "g", 1267], [5, "g", 1232], [6, "g", 1172],
            [7, "r", 1182], [8, "r", 1223], [9, "r", 1259], [10, "r", 1273], [11, "g", 1241], [12, "g", 1228], [13, "r", 1313],
            [14, "r", 1337], [15, "r", 1351], [16, "r", 1372], [17, "g", 1330], [18, "r", 1435], [19, "g", 1316], [20, "r", 1415],
            [21, "r", 1459], [22, "r", 1465], [23, "g", 1412], [24, "g", 1370], [25, "r", 1381], [26, "g", 1379], [27, "r", 1436],
            [32, "g", 1343], [33, "r", 1491], [34, "g", 1381], [35, "g", 1362], [36, "g", 1314], [37, "r", 1326], [38, "r", 1368],
      ],
      levels: [
            [3200, 1, "call: 3200", 0, ""],
            [3250, 1, "call: 3250", 5, "put: 3250:49733"],
            [3275, 0, "", 1, "put: 3275"],
            [3300, 1, "call: 3300", 13, "put: 3300:131887"],
            [3325, 0, "", 1, "put: 3325"],
            [3350, 1, "call: 3350", 6, "put: 3350:55721"],
            [3375, 0, "", 1, "put: 3375"],
            [3400, 2, "call: 3400:1", 15, "put: 3400:159462"],
            [3425, 0, "", 4, "put: 3425:35819"],
            [3450, 1, "call: 3450", 6, "put: 3450:58572"],
            [3475, 0, "", 2, "put: 3475:1"],
            [3500, 6, "call: 3500:5", 18, "put: 3500:193994"],
            [3525, 0, "", 2, "put: 3525:1"],
            [3550, 2, "call: 3550:1", 4, "put: 3550:34454"],
            [3575, 0, "", 1, "put: 3575"],
            [3600, 9, "call: 3600:90213", 12, "put: 3600:124726"],
            [3625, 0, "", 1, "put: 3625"],
            [3650, 3, "call: 3650:238", 4, "put: 3650:33369"],
            [3675, 0, "", 4, "put: 3675:34100"],
            [3700, 6, "call: 3700", 9, "put: 3700:94989"],
            [3725, 0, "", 1, "put: 3725"],
            [3750, 6, "call: 3750", 5, "put: 3750:45436"],
            [3775, 0, "", 1, "put: 3775"],
            [3800, 7, "call: 3800:66412", 5, "put: 3800:52080"],
            [3825, 0, "", 1, "put: 3825"],
            [3850, 4, "call: 3850:32376", 2, "put: 3850:1"],
            [3875, 0, "", 1, "put: 3875"],
            [3900, 11, "call: 3900:115920", 6, "put: 3900:61704"],
            [3925, 0, "", 1, "put: 3925"],
            [3950, 3, "call: 3950:28813", 4, "put: 3950:35502"],
            [3975, 0, "", 1, "put: 3975"],
            [4000, 10, "call: 4000:107912", 5, "put: 4000:45157"],
            [4025, 1, "call: 4025", 1, "put: 4025"],
            [4050, 0, "", 5, "put: 4050:53088"],
            [4100, 0, "", 6, ""],
      ],
      strikes: [
            { at: 3900, label: "strike: 3900(115920)", color: LIME },
            { at: 3500, label: "strike: 3500(193994)", color: RED },
      ],
      ticks: [3993, 3918, 3843, 3763, 3688, 3613, 3538, 3463, 3388, 3313, 3238],
      subTicks: ["4665606", "4272777"],
      dates: [
            [0, ""], [4, "10 May 2022"], [8, "16 May 2022"], [12, "20 May 2022"], [16, "26 May 2022"], [20, "1 Jun 2022"],
            [24, "7 Jun 2022"], [28, "13 Jun 2022"], [32, "17 Jun 2022"], [36, "23 Jun 2022"], [40, "29 Jun 2022"],
      ],
      marks: [
            { at: 1, name: "prima", date: "2022.05.05 00:00:00(40)", label: "2022.05.05 00:00", main: true },
            { at: 39, name: "start", date: "2022.06.28 00:00:00", label: "2022.06.28 00:00", main: true },
            { at: 57, name: "ultima", date: "2022.07.16 00:00:00", label: "2022.07.16 00:00", main: true },
      ],
      monthLines: [20, 42],
      shiftMark: 3343.5,
      copyright: 3617,
};

export const App = () => {
      return (
            <main className="flex h-[2196px] w-[3978px] flex-col overflow-hidden bg-[#d7e4f2]">
                  <div className="flex">
                        <ChartWindow data={ita} side="left" row="top" />
                        <ChartWindow data={usa} side="right" row="top" />
                  </div>
                  <div className="flex">
                        <ChartWindow data={ger} side="left" row="bottom" />
                        <ChartWindow data={euro} side="right" row="bottom" active />
                  </div>
            </main>
      );
};

export default App;
